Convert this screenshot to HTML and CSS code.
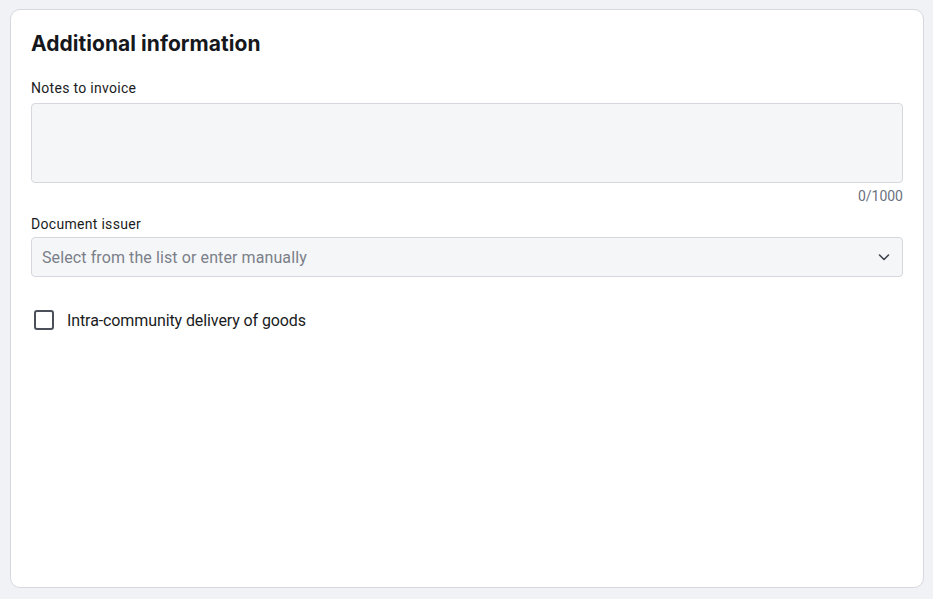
FILE: index.html
```html
<!DOCTYPE html>
<html>
<head>
<meta charset="utf-8">
<link rel="stylesheet" href="styles.css">
</head>
<body>
<div class="card">
  <h2 class="title">Additional information</h2>
  <div class="field">
    <label class="label">Notes to invoice</label>
    <div class="textarea"></div>
    <div class="counter">0/1000</div>
  </div>
  <div class="field">
    <label class="label">Document issuer</label>
    <div class="select">
      <span class="placeholder">Select from the list or enter manually</span>
      <svg class="chev" width="14" height="14" viewBox="0 0 14 14"><path d="M2.5 5 L7 9.5 L11.5 5" fill="none" stroke="#3d4350" stroke-width="1.6" stroke-linecap="round" stroke-linejoin="round"/></svg>
    </div>
  </div>
  <div class="check-row">
    <span class="checkbox"></span>
    <span class="check-label">Intra-community delivery of goods</span>
  </div>
</div>
</body>
</html>
```
FILE: styles.css
```css
html, body {
  margin: 0;
  padding: 0;
  background: #f1f2f6;
  font-family: Roboto, "Liberation Sans", sans-serif;
  color: #1a1c22;
}
.card {
  margin: 9px 9px 0 10px;
  background: #fff;
  border: 1px solid #d6d8de;
  border-radius: 10px;
  padding: 20px 20px 0 20px;
  box-sizing: border-box;
  height: 579px;
}
.title {
  margin: 0;
  font-family: Inter, "Noto Sans", sans-serif;
  font-weight: 650;
  font-size: 21px;
  line-height: 28px;
  letter-spacing: 0.05px;
  color: #15171c;
}
.field {
  display: flex;
  flex-direction: column;
}
.label {
  font-size: 14px;
  line-height: 20px;
  letter-spacing: 0.3px;
  margin-top: 20px;
  margin-bottom: 5px;
  color: #1a1c22;
}
.textarea {
  height: 78px;
  background: #f5f6f8;
  border: 1px solid #d6d8de;
  border-radius: 4px;
}
.counter {
  text-align: right;
  font-size: 14px;
  line-height: 16px;
  margin-top: 5px;
  color: #6b7280;
}
.field + .field .label {
  margin-top: 10px;
  margin-bottom: 3px;
}
.select {
  height: 38px;
  background: #f5f6f8;
  border: 1px solid #d6d8de;
  border-radius: 4px;
  display: flex;
  align-items: center;
  justify-content: space-between;
  padding: 0 11px 0 10px;
}
.placeholder {
  font-size: 16px;
  letter-spacing: 0.1px;
  color: #7a7f89;
}
.chev { display: block; }
.check-row {
  display: flex;
  align-items: center;
  margin-top: 33px;
  margin-left: 3px;
  gap: 13px;
}
.checkbox {
  width: 16px;
  height: 16px;
  border: 2px solid #4a4f5a;
  border-radius: 3px;
}
.check-label {
  font-size: 16px;
  letter-spacing: -0.1px;
  color: #1a1c22;
}
```
